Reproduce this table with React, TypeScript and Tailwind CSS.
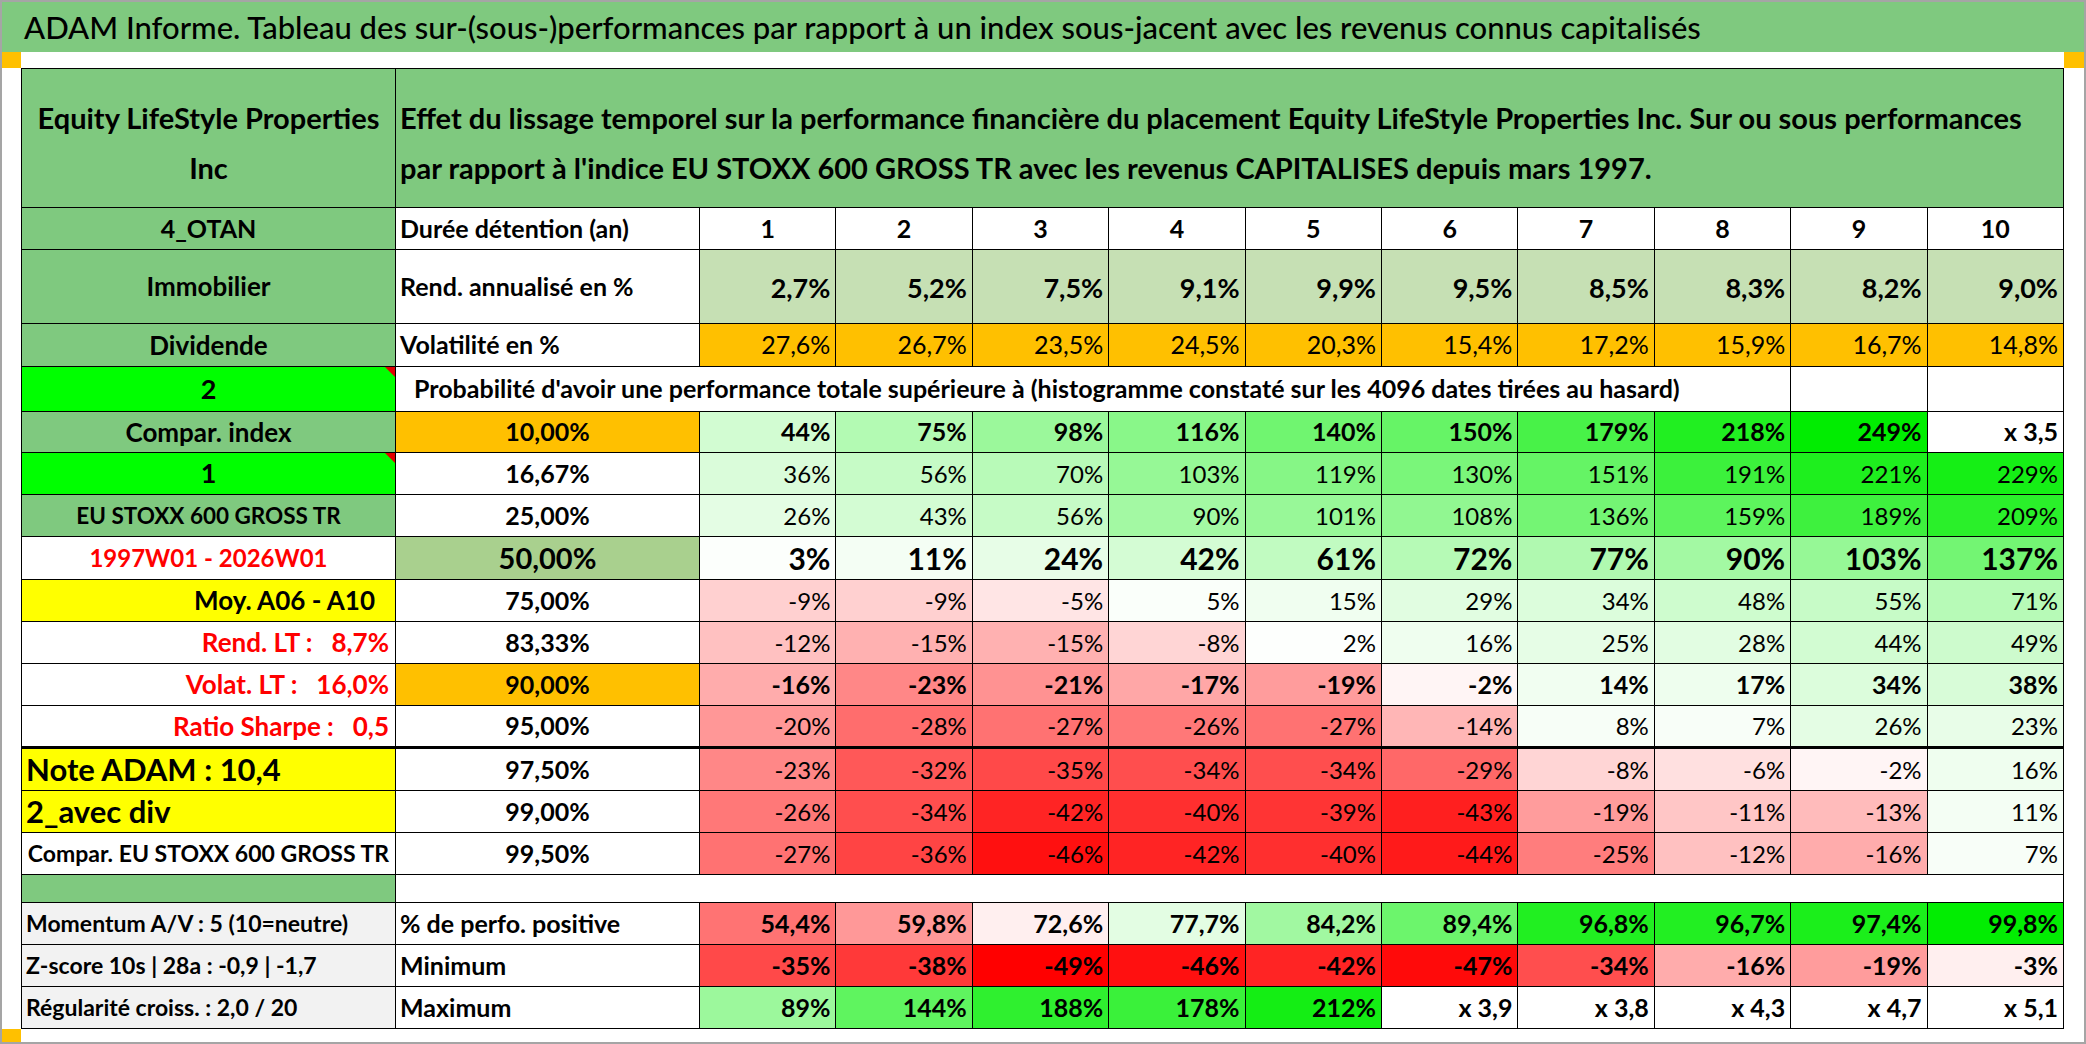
import React from "react";

type Val = number | string;

function scaleColor(v: number, lo: number, mid: number, hi: number) {
  if (v < mid) {
    const t = Math.min(1, (mid - v) / (mid - lo));
    const c = Math.round(255 * (1 - t));
    return `rgb(255,${c},${c})`;
  }
  const t = Math.min(1, (v - mid) / (hi - mid));
  const c = Math.round(255 * (1 - t));
  const g = Math.round(255 - 18 * t);
  return `rgb(${c},${g},${c})`;
}

function Cell({
  children,
  className = "",
  style,
}: {
  children?: React.ReactNode;
  className?: string;
  style?: React.CSSProperties;
}) {
  return (
    <div
      className={`relative flex items-center overflow-hidden whitespace-pre border-r border-b border-black ${className}`}
      style={style}
    >
      {children}
    </div>
  );
}

function Corner() {
  return (
    <span className="absolute right-0 top-0 h-0 w-0 border-l-[10px] border-t-[10px] border-l-transparent border-t-[#e00000]" />
  );
}

const GREEN = "bg-[#7fc97f]";

const probRows: {
  a: React.ReactNode;
  aCls: string;
  p: string;
  pCls: string;
  vals: Val[];
  vCls: string;
  rowCls?: string;
}[] = [
  {
    a: "Compar. index",
    aCls: `${GREEN} justify-center font-bold text-[26px]`,
    p: "10,00%",
    pCls: "bg-[#ffc000] font-bold",
    vals: [44, 75, 98, 116, 140, 150, 179, 218, 249, "x 3,5"],
    vCls: "font-bold text-[25px]",
  },
  {
    a: (
      <>
        1
        <Corner />
      </>
    ),
    aCls: "bg-[#00ff00] justify-center font-bold text-[27px]",
    p: "16,67%",
    pCls: "font-bold",
    vals: [36, 56, 70, 103, 119, 130, 151, 191, 221, 229],
    vCls: "",
  },
  {
    a: "EU STOXX 600 GROSS TR",
    aCls: `${GREEN} justify-center font-bold text-[22.5px]`,
    p: "25,00%",
    pCls: "font-bold",
    vals: [26, 43, 56, 90, 101, 108, 136, 159, 189, 209],
    vCls: "",
  },
  {
    a: "1997W01 - 2026W01",
    aCls: "justify-center font-bold text-[24px] text-[#ff0000]",
    p: "50,00%",
    pCls: "bg-[#a9d08e] font-bold text-[29px]",
    vals: [3, 11, 24, 42, 61, 72, 77, 90, 103, 137],
    vCls: "font-bold text-[30px]",
  },
  {
    a: "Moy. A06 - A10",
    aCls: "bg-[#ffff00] justify-end pr-[20px] font-bold text-[26px]",
    p: "75,00%",
    pCls: "font-bold",
    vals: [-9, -9, -5, 5, 15, 29, 34, 48, 55, 71],
    vCls: "",
  },
  {
    a: "Rend. LT :   8,7%",
    aCls: "justify-end pr-[6px] font-bold text-[26px] text-[#ff0000]",
    p: "83,33%",
    pCls: "font-bold",
    vals: [-12, -15, -15, -8, 2, 16, 25, 28, 44, 49],
    vCls: "",
  },
  {
    a: "Volat. LT :   16,0%",
    aCls: "justify-end pr-[6px] font-bold text-[26px] text-[#ff0000]",
    p: "90,00%",
    pCls: "bg-[#ffc000] font-bold",
    vals: [-16, -23, -21, -17, -19, -2, 14, 17, 34, 38],
    vCls: "font-bold text-[25px]",
  },
  {
    a: "Ratio Sharpe :   0,5",
    aCls: "justify-end pr-[6px] font-bold text-[26px] text-[#ff0000]",
    p: "95,00%",
    pCls: "font-bold",
    vals: [-20, -28, -27, -26, -27, -14, 8, 7, 26, 23],
    vCls: "",
    rowCls: "border-b-[3px]",
  },
  {
    a: "Note ADAM : 10,4",
    aCls: "bg-[#ffff00] justify-start pl-[4px] font-bold text-[31px]",
    p: "97,50%",
    pCls: "font-bold",
    vals: [-23, -32, -35, -34, -34, -29, -8, -6, -2, 16],
    vCls: "",
  },
  {
    a: "2_avec div",
    aCls: "bg-[#ffff00] justify-start pl-[4px] font-bold text-[31px]",
    p: "99,00%",
    pCls: "font-bold",
    vals: [-26, -34, -42, -40, -39, -43, -19, -11, -13, 11],
    vCls: "",
  },
  {
    a: "Compar. EU STOXX 600 GROSS TR",
    aCls: "justify-end pr-[6px] font-bold text-[23px]",
    p: "99,50%",
    pCls: "font-bold",
    vals: [-27, -36, -46, -42, -40, -44, -25, -12, -16, 7],
    vCls: "",
  },
];

const rend = ["2,7%", "5,2%", "7,5%", "9,1%", "9,9%", "9,5%", "8,5%", "8,3%", "8,2%", "9,0%"];
const vol = ["27,6%", "26,7%", "23,5%", "24,5%", "20,3%", "15,4%", "17,2%", "15,9%", "16,7%", "14,8%"];
const positive = [54.4, 59.8, 72.6, 77.7, 84.2, 89.4, 96.8, 96.7, 97.4, 99.8];
const minimum = [-35, -38, -49, -46, -42, -47, -34, -16, -19, -3];
const maximum: Val[] = [89, 144, 188, 178, 212, "x 3,9", "x 3,8", "x 4,3", "x 4,7", "x 5,1"];

function pct(v: Val) {
  return typeof v === "number" ? `${v}%` : v;
}

function ValueCell({ v, cls, color }: { v: Val; cls: string; color?: string }) {
  return (
    <Cell className={`justify-end pr-[5px] text-[24px] ${cls}`} style={color ? { backgroundColor: color } : undefined}>
      {pct(v)}
    </Cell>
  );
}

export default function App() {
  return (
    <div className="box-border flex h-[1044px] w-[2086px] flex-col border-2 border-[#a5a5a5] bg-white font-[Lato,sans-serif] text-black">
      <div className={`flex h-[50px] shrink-0 items-center pl-[22px] text-[31px] font-medium ${GREEN}`}>
        ADAM Informe. Tableau des sur-(sous-)performances par rapport à un index sous-jacent avec les revenus connus capitalisés
      </div>
      <div className="flex h-[16px] shrink-0 justify-between">
        <div className="w-[19px] bg-[#ffc000]" />
        <div className="w-[20px] bg-[#ffc000]" />
      </div>
      <div className="flex shrink-0">
        <div className="w-[19px] shrink-0" />
        <div className="grid w-[2043px] shrink-0 grid-cols-[374px_304px_repeat(10,1fr)] grid-rows-[139px_42px_74px_43px_45px_41px_42px_42px_43px_42px_42px_42px_43px_42px_42px_42px_28px_42px_42px_42px] border-l border-t border-black">
          {/* header */}
          <Cell className={`${GREEN} justify-center text-center text-[29px] font-bold leading-[50px] whitespace-normal`}>
            <span className="pt-[10px]">
              Equity LifeStyle Properties
              <br />
              Inc
            </span>
          </Cell>
          <Cell className={`${GREEN} col-span-11 pl-[4px] text-[29px] font-bold leading-[50px] whitespace-normal`}>
            <span className="pt-[10px]">
              Effet du lissage temporel sur la performance financière du placement Equity LifeStyle Properties Inc. Sur ou sous performances
              <br />
              par rapport à l'indice EU STOXX 600 GROSS TR avec les revenus CAPITALISES depuis mars 1997.
            </span>
          </Cell>

          {/* durations */}
          <Cell className={`${GREEN} justify-center text-[25px] font-bold`}>4_OTAN</Cell>
          <Cell className="pl-[4px] text-[25px] font-bold">Durée détention (an)</Cell>
          {[1, 2, 3, 4, 5, 6, 7, 8, 9, 10].map((d) => (
            <Cell key={d} className="justify-center text-[25px] font-bold">
              {d}
            </Cell>
          ))}

          {/* rendement */}
          <Cell className={`${GREEN} justify-center text-[26px] font-bold`}>Immobilier</Cell>
          <Cell className="pl-[4px] text-[25px] font-bold">Rend. annualisé en %</Cell>
          {rend.map((r, i) => (
            <Cell key={i} className="justify-end bg-[#c6e0b4] pr-[5px] pt-[4px] text-[27px] font-bold">
              {r}
            </Cell>
          ))}

          {/* volatilite */}
          <Cell className={`${GREEN} justify-center text-[26px] font-bold`}>Dividende</Cell>
          <Cell className="pl-[4px] text-[25px] font-bold">Volatilité en %</Cell>
          {vol.map((r, i) => (
            <Cell key={i} className="justify-end bg-[#ffc000] pr-[5px] text-[25px]">
              {r}
            </Cell>
          ))}

          {/* probabilite header */}
          <Cell className="justify-center bg-[#00ff00] text-[27px] font-bold">
            2
            <Corner />
          </Cell>
          <Cell className="col-span-9 pl-[18px] text-[25px] font-bold">
            Probabilité d'avoir une performance totale supérieure à (histogramme constaté sur les 4096 dates tirées au hasard)
          </Cell>
          <Cell />
          <Cell />

          {probRows.map((r, ri) => (
            <React.Fragment key={ri}>
              <Cell className={`${r.aCls} ${r.rowCls ?? ""}`}>{r.a}</Cell>
              <Cell className={`justify-center text-[25px] ${r.pCls} ${r.rowCls ?? ""}`}>{r.p}</Cell>
              {r.vals.map((v, i) => (
                <ValueCell
                  key={i}
                  v={v}
                  cls={`${r.vCls} ${r.rowCls ?? ""}`}
                  color={typeof v === "number" ? scaleColor(v, -49, 0, 250) : undefined}
                />
              ))}
            </React.Fragment>
          ))}

          {/* empty */}
          <Cell className={GREEN} />
          <div className="col-span-11 border-b border-r border-black" />

          {/* stats */}
          <Cell className="bg-[#f2f2f2] pl-[4px] text-[23px] font-bold">Momentum A/V : 5 (10=neutre)</Cell>
          <Cell className="pl-[4px] text-[25px] font-bold">% de perfo. positive</Cell>
          {positive.map((v, i) => (
            <ValueCell
              key={i}
              v={v.toFixed(1).replace(".", ",") + "%"}
              cls="font-bold text-[25px]"
              color={scaleColor(v, 37.5, 75, 100)}
            />
          ))}

          <Cell className="bg-[#f2f2f2] pl-[4px] text-[23px] font-bold">Z-score 10s | 28a : -0,9 | -1,7</Cell>
          <Cell className="pl-[4px] text-[25px] font-bold">Minimum</Cell>
          {minimum.map((v, i) => (
            <ValueCell key={i} v={v} cls="font-bold text-[25px]" color={scaleColor(v, -49, 0, 250)} />
          ))}

          <Cell className="bg-[#f2f2f2] pl-[4px] text-[23px] font-bold">Régularité croiss. : 2,0 / 20</Cell>
          <Cell className="pl-[4px] text-[25px] font-bold">Maximum</Cell>
          {maximum.map((v, i) => (
            <ValueCell
              key={i}
              v={v}
              cls="font-bold text-[25px]"
              color={typeof v === "number" ? scaleColor(v, -49, 0, 230) : undefined}
            />
          ))}
        </div>
        <div className="w-[20px] shrink-0" />
      </div>
      <div className="flex flex-1">
        <div className="w-[19px] bg-[#ffc000]" />
      </div>
    </div>
  );
}
